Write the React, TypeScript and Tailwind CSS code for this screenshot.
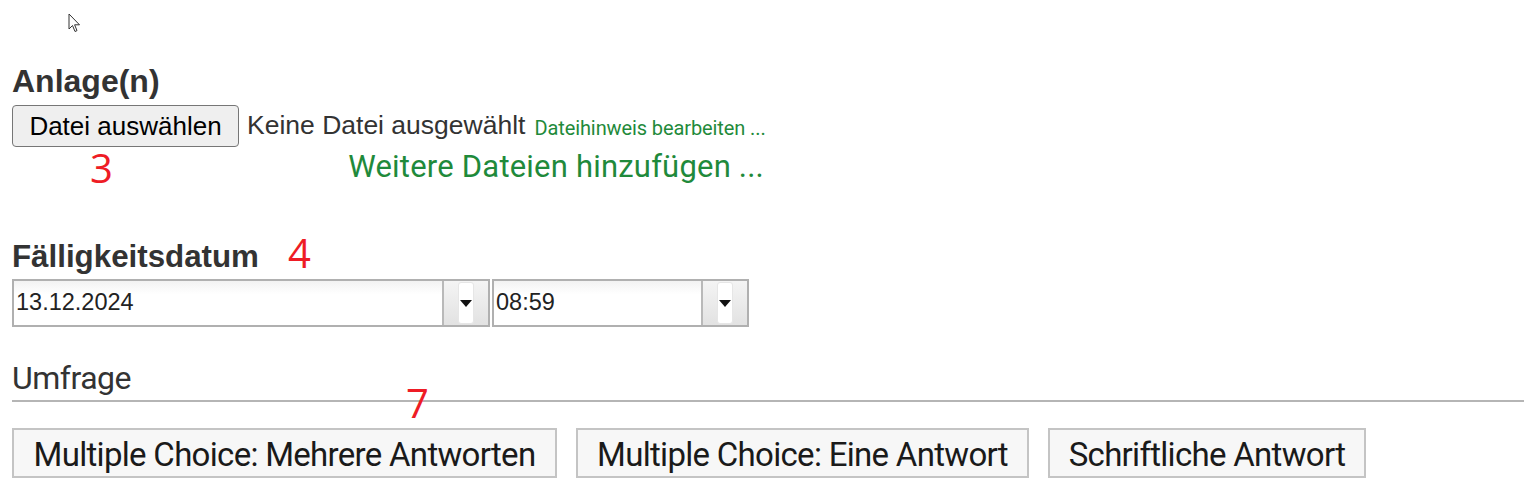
export default function App() {
  return (
    <div className="relative w-[1524px] h-[504px] bg-white overflow-hidden" style={{ fontFamily: "'Liberation Sans', Arial, sans-serif" }}>
      {/* mouse cursor */}
      <svg className="absolute left-[68px] top-[13px]" width="14" height="21" viewBox="0 0 14 21">
        <path d="M1 1 L1 16 L4.5 12.5 L7 18.5 L9 17.6 L6.6 11.8 L11.5 11.8 Z" fill="white" stroke="#333" strokeWidth="1" strokeLinejoin="round" />
      </svg>

      <div className="pl-3 pt-[62px]">
        <h2 className="text-[32px] font-bold text-[#333] leading-[38px]">Anlage(n)</h2>

        <div className="flex items-center mt-[5px]">
          <button className="h-[42px] w-[227px] bg-[#efefef] border border-[#767676] rounded-[4px] text-[26px] text-black">
            Datei auswählen
          </button>
          <span className="ml-2 text-[26.5px] text-[#333]">Keine Datei ausgewählt</span>
          <span className="ml-[9px] mt-1 text-[20px] tracking-[-0.1px] text-[#1f8a3b]" style={{ fontFamily: "Roboto, sans-serif" }}>
            Dateihinweis bearbeiten ...
          </span>
        </div>

        <div className="flex w-[752px] h-[42px]">
          <span className="ml-[78px] text-[40px] leading-[42px] text-[#ee1c25]" style={{ fontFamily: "'Open Sans', sans-serif" }}>3</span>
          <span className="ml-auto text-[31px] leading-[40px] tracking-[0.2px] text-[#1f8a3b]" style={{ fontFamily: "Roboto, sans-serif" }}>
            Weitere Dateien hinzufügen ...
          </span>
        </div>

        <div className="flex items-start mt-[49px] h-[38px]">
          <h2 className="text-[31.3px] font-bold text-[#333] leading-[38px]">Fälligkeitsdatum</h2>
          <span className="ml-[29px] -mt-[5px] text-[40px] leading-[40px] text-[#ee1c25]" style={{ fontFamily: "'Open Sans', sans-serif" }}>4</span>
        </div>

        <div className="flex mt-[3px]">
          <DropInput value="13.12.2024" width="w-[428px]" />
          <div className="w-[2px]" />
          <DropInput value="08:59" width="w-[207px]" />
        </div>

        <div className="mt-[32px] text-[32px] leading-[38px] tracking-[-0.5px] text-[#333]" style={{ fontFamily: "Roboto, sans-serif" }}>Umfrage</div>
        <div className="h-[2px] bg-[#b5b5b5] mt-[3px] relative">
          <span className="absolute left-[394px] -top-[17px] text-[40px] leading-[40px] text-[#ee1c25]" style={{ fontFamily: "'Open Sans', sans-serif" }}>7</span>
        </div>

        <div className="flex gap-[19px] mt-[26px]" style={{ fontFamily: "Roboto, sans-serif" }}>
          <OptionButton label="Multiple Choice: Mehrere Antworten" width="w-[545px]" />
          <OptionButton label="Multiple Choice: Eine Antwort" width="w-[453px]" />
          <OptionButton label="Schriftliche Antwort" width="w-[318px]" />
        </div>
      </div>
    </div>
  );
}

function DropInput({ value, width }: { value: string; width: string }) {
  return (
    <div className="flex h-[48px] border-2 border-[#b0b0b0]">
      <div className={`${width} flex items-center pl-[2px] text-[23.5px] text-[#222] bg-gradient-to-b from-[#f2f2f2] to-white to-[30%]`}>
        {value}
      </div>
      <div className="w-[46px] flex items-center justify-center border-l-2 border-[#b9b9b9] bg-gradient-to-b from-[#f4f4f4] to-[#e2e2e2]">
        <div className="w-[16px] h-[42px] bg-white rounded-[3px] border border-[#e6e6e6] flex items-center justify-center">
          <svg width="12" height="7" viewBox="0 0 12 7">
            <path d="M0 0 L12 0 L6 7 Z" fill="#111" />
          </svg>
        </div>
      </div>
    </div>
  );
}

function OptionButton({ label, width }: { label: string; width: string }) {
  return (
    <button className={`${width} h-[50px] bg-[#f7f7f7] border-2 border-[#c4c4c4] text-[33px] text-[#1a1a1a] tracking-[-0.7px]`}>
      {label}
    </button>
  );
}
